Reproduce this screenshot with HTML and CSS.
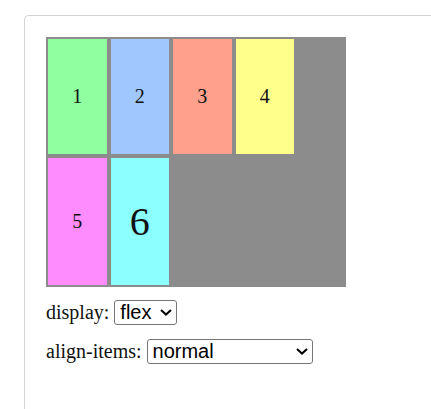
FILE: index.html
```html
<!DOCTYPE html>
<html>
<head>
<meta charset="utf-8">
<link rel="stylesheet" href="styles.css">
</head>
<body>
<div class="card">
  <div class="flexbox">
    <div class="row row-a">
      <div class="item c1">1</div>
      <div class="item c2">2</div>
      <div class="item c3">3</div>
      <div class="item c4">4</div>
    </div>
    <div class="row row-b">
      <div class="item c5">5</div>
      <div class="item c6 big">6</div>
    </div>
  </div>
  <div class="controls">
    <div class="ctl">
      <label>display:</label>
      <span class="selwrap">
        <select class="sel sel-short"><option>flex</option></select>
        <svg class="chev" width="12" height="7" viewBox="0 0 12 7"><path d="M1 1 L6 5.6 L11 1" fill="none" stroke="#000" stroke-width="2"/></svg>
      </span>
    </div>
    <div class="ctl">
      <label>align-items:</label>
      <span class="selwrap">
        <select class="sel sel-long"><option>normal</option></select>
        <svg class="chev" width="12" height="7" viewBox="0 0 12 7"><path d="M1 1 L6 5.6 L11 1" fill="none" stroke="#000" stroke-width="2"/></svg>
      </span>
    </div>
  </div>
</div>
</body>
</html>
```
FILE: styles.css
```css
html, body {
  margin: 0;
  padding: 0;
  background: #fff;
  overflow: hidden;
  width: 431px;
  height: 409px;
}
body {
  font-family: "Liberation Serif", "Times New Roman", serif;
  font-size: 20px;
  color: #000;
  padding: 15px 0 0 24px;
  box-sizing: border-box;
}
.card {
  width: 407px;
  height: 394px;
  border: 1px solid #d3d3d3;
  border-right: 0;
  border-bottom: 0;
  border-top-left-radius: 5px;
  box-sizing: border-box;
  padding: 21px 0 0 21px;
}
.flexbox {
  width: 300px;
  height: 250px;
  background: #8c8c8c;
  display: flex;
  flex-direction: column;
}
.row {
  display: flex;
}
.row-a { height: 119px; }
.row-b { height: 131px; }
.item {
  width: 58.5px;
  margin: 2px;
  display: flex;
  align-items: center;
  justify-content: center;
  font-size: 20px;
  color: #111;
}
.c1 { background: #8fff9f; }
.c2 { background: #a0c8ff; }
.c3 { background: #ffa08c; }
.c4 { background: #ffff8c; }
.c5 { background: #ff8cff; }
.c6 { background: #8cffff; }
.big { font-size: 40px; }
.controls {
  margin-top: 13px;
  display: flex;
  flex-direction: column;
  gap: 14px;
}
.ctl {
  display: flex;
  align-items: center;
  height: 25px;
  gap: 5px;
}
.ctl label {
  font-size: 20px;
  color: #111;
}
.selwrap {
  position: relative;
  display: flex;
}
.sel {
  -webkit-appearance: none;
  appearance: none;
  height: 25px;
  box-sizing: border-box;
  font-family: "Liberation Sans", Arial, sans-serif;
  font-size: 20px;
  line-height: 23px;
  border: 1px solid #767676;
  border-radius: 3px;
  background: #fff;
  color: #000;
  padding: 0 0 0 5px;
  margin: 0;
}
.chev {
  position: absolute;
  right: 5px;
  top: 9px;
  pointer-events: none;
}
.sel-short { width: 63px; }
.sel-long { width: 166px; }
```
